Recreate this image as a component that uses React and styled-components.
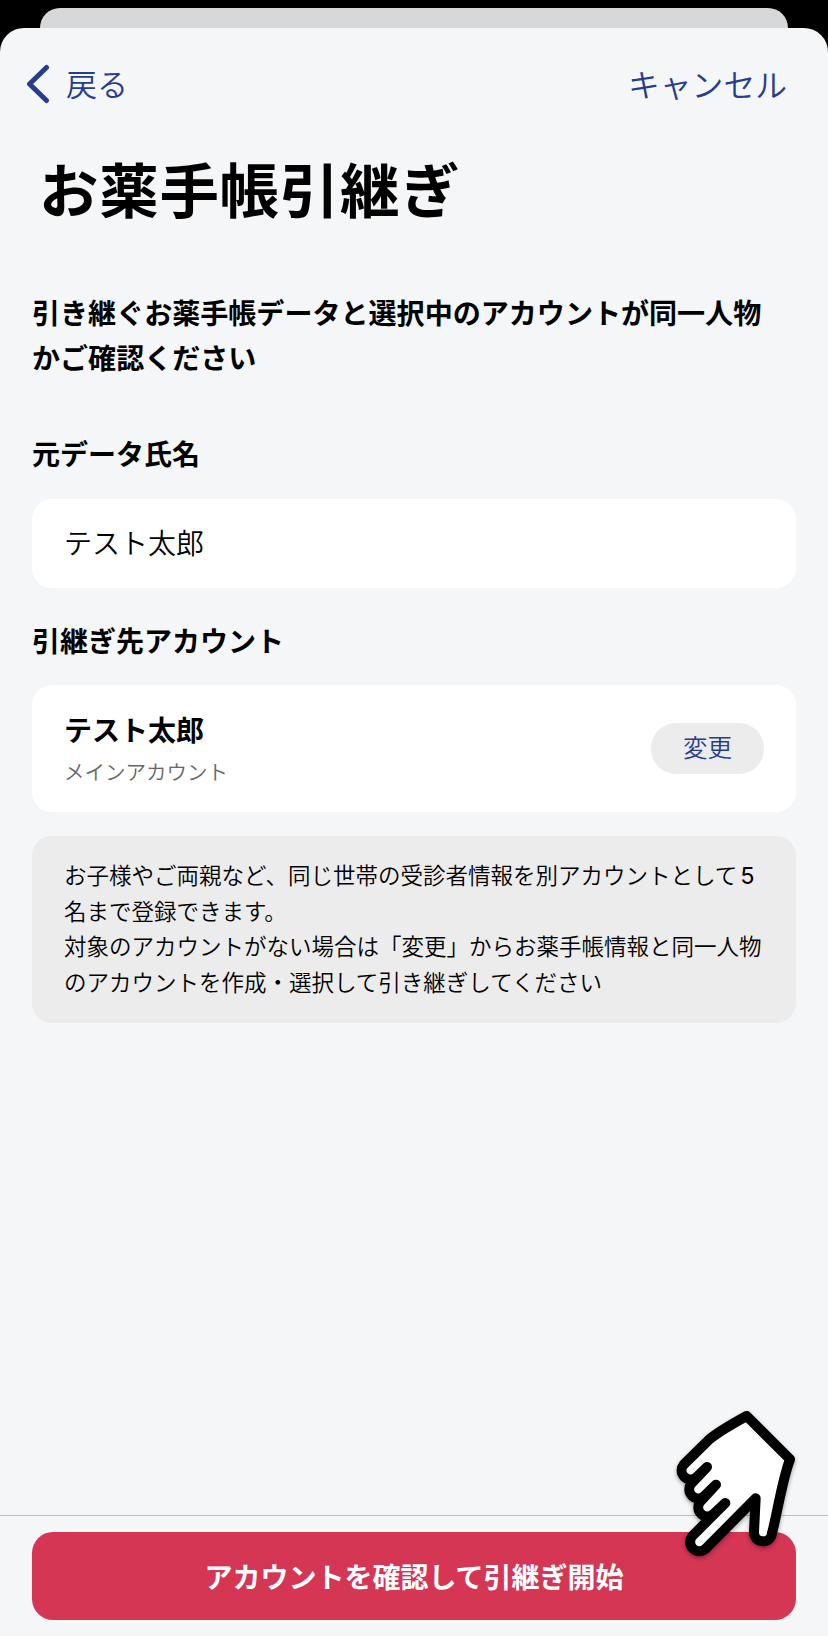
import styled, { createGlobalStyle } from "styled-components";

const Colours = {
  navy: "#263c8f",
  red: "#d43654",
  page: "#f4f6f8",
  grey: "#ececec",
};

const GlobalStyle = createGlobalStyle`
  * {
    box-sizing: border-box;
  }

  body {
    margin: 0;
    background: #000;
    font-family: "Noto Sans CJK JP", sans-serif;
    color: #000;
  }

  h1, h2, p {
    margin: 0;
  }

  button {
    border: 0;
    padding: 0;
    background: none;
    font-family: inherit;
  }
`;

const Screen = styled.div`
  position: relative;
  display: flex;
  flex-direction: column;
  width: 828px;
  height: 1636px;
  padding-top: 8px;
  overflow: hidden;
  background: #000;
`;

const BackSheet = styled.div`
  flex: none;
  height: 20px;
  margin: 0 40px;
  border-radius: 20px 20px 0 0;
  background: #d7d8d9;
`;

const Sheet = styled.main`
  flex: 1;
  display: flex;
  flex-direction: column;
  border-radius: 24px 24px 0 0;
  background: ${Colours.page};
`;

const NavBar = styled.header`
  display: flex;
  justify-content: space-between;
  align-items: center;
  height: 112px;
  padding: 0 41px 0 26px;
`;

const NavButton = styled.button`
  display: flex;
  align-items: center;
  gap: 16px;
  color: ${Colours.navy};
  font-size: ${(props) => props.$size}px;
  font-weight: 350;
  line-height: 44px;
`;

const NavText = styled.span`
  padding-bottom: 3px;
`;

const Title = styled.h1`
  height: 100px;
  padding-left: 39px;
  font-size: 59.5px;
  font-weight: 700;
  letter-spacing: 0.7px;
  line-height: 95px;
`;

const Content = styled.section`
  flex: 1;
  padding: 49px 32px 0;
`;

const Lead = styled.p`
  font-size: 28.05px;
  font-weight: 700;
  line-height: 45px;
  white-space: nowrap;
`;

const Label = styled.h2`
  margin-top: ${(props) => props.$gap}px;
  margin-bottom: ${(props) => props.$below}px;
  font-size: 28px;
  font-weight: 700;
  line-height: 40px;
`;

const Card = styled.div`
  display: flex;
  justify-content: space-between;
  align-items: center;
  height: ${(props) => props.$height}px;
  padding: 0 32px;
  border-radius: 20px;
  background: #fff;
`;

const Name = styled.p`
  padding-bottom: ${(props) => (props.$bold ? 0 : 4)}px;
  font-size: 28px;
  font-weight: ${(props) => (props.$bold ? 700 : 350)};
  line-height: 44px;
`;

const AccountType = styled.p`
  color: #666;
  font-size: 20.5px;
  font-weight: 350;
  line-height: 40px;
`;

const ChangeButton = styled.button`
  width: 113px;
  height: 51px;
  border-radius: 25px;
  background: ${Colours.grey};
  color: ${Colours.navy};
  font-size: 24.5px;
  font-weight: 350;
  line-height: 48px;
  padding-bottom: 3px;
`;

const Note = styled.div`
  height: 187px;
  margin-top: 24px;
  padding: 21px 32px;
  border-radius: 20px;
  background: ${Colours.grey};
  font-size: 22.5px;
  font-weight: 350;
  line-height: 35.6px;
  white-space: nowrap;
`;

const Digit = styled.span`
  margin-left: 3px;
  font-family: Inter, sans-serif;
  font-size: 23.5px;
  font-weight: 400;
  line-height: 1;
`;

const Footer = styled.footer`
  height: 121px;
  padding: 16px 32px;
  border-top: 1px solid #bcbebf;
`;

const StartButton = styled.button`
  display: block;
  width: 100%;
  height: 88px;
  border-radius: 21px;
  background: ${Colours.red};
  color: #fff;
  font-size: 28px;
  font-weight: 700;
  line-height: 88px;
`;

const Pointer = styled.svg`
  position: absolute;
  right: 0;
  bottom: 0;
  pointer-events: none;
  filter: drop-shadow(0 2px 2px rgba(0, 0, 0, 0.35));
`;

const BackIcon = () => (
  <svg width="24" height="40" viewBox="0 0 24 40" fill="none">
    <path
      d="M20.5 3.5 3.5 20l17 16.5"
      stroke={Colours.navy}
      strokeWidth="5"
      strokeLinecap="round"
      strokeLinejoin="round"
    />
  </svg>
);

const PointingHand = () => (
  <Pointer width="178" height="246" viewBox="0 0 534 738">
    <path
      d="M290 78 420 208C396 270 378 390 366 429A27 27 0 0 1 312 425L317 325 167.500 475.500A27.500 27.500 0 0 1 128.500 436.500L226 339 189 373A27 27 0 0 1 151 335L198 284 162 319A27 27 0 0 1 124 281L171 231 139 262A27 27 0 0 1 101 224L175 151Q204 125 290 78Z"
      fill="#fff"
      stroke="#000"
      strokeWidth="30"
      strokeLinecap="round"
      strokeLinejoin="round"
    />
  </Pointer>
);

const App = () => {
  return (
    <Screen>
      <GlobalStyle />
      <BackSheet />
      <Sheet>
        <NavBar>
          <NavButton $size={31}>
            <BackIcon />
            <NavText>戻る</NavText>
          </NavButton>
          <NavButton $size={31.8}>
            <NavText>キャンセル</NavText>
          </NavButton>
        </NavBar>
        <Title>お薬手帳引継ぎ</Title>

        <Content>
          <Lead>
            引き継ぐお薬手帳データと選択中のアカウントが同一人物
            <br />
            かご確認ください
          </Lead>

          <Label $gap={54} $below={26}>
            元データ氏名
          </Label>
          <Card $height={89}>
            <Name>テスト太郎</Name>
          </Card>

          <Label $gap={32} $below={25}>
            引継ぎ先アカウント
          </Label>
          <Card $height={127}>
            <div>
              <Name $bold>テスト太郎</Name>
              <AccountType>メインアカウント</AccountType>
            </div>
            <ChangeButton>変更</ChangeButton>
          </Card>

          <Note>
            <p>
              お子様やご両親など、同じ世帯の受診者情報を別アカウントとして
              <Digit>5</Digit>
              <br />
              名まで登録できます。
            </p>
            <p>
              対象のアカウントがない場合は「変更」からお薬手帳情報と同一人物
              <br />
              のアカウントを作成・選択して引き継ぎしてください
            </p>
          </Note>
        </Content>

        <Footer>
          <StartButton>アカウントを確認して引継ぎ開始</StartButton>
        </Footer>
      </Sheet>
      <PointingHand />
    </Screen>
  );
};

export default App;
